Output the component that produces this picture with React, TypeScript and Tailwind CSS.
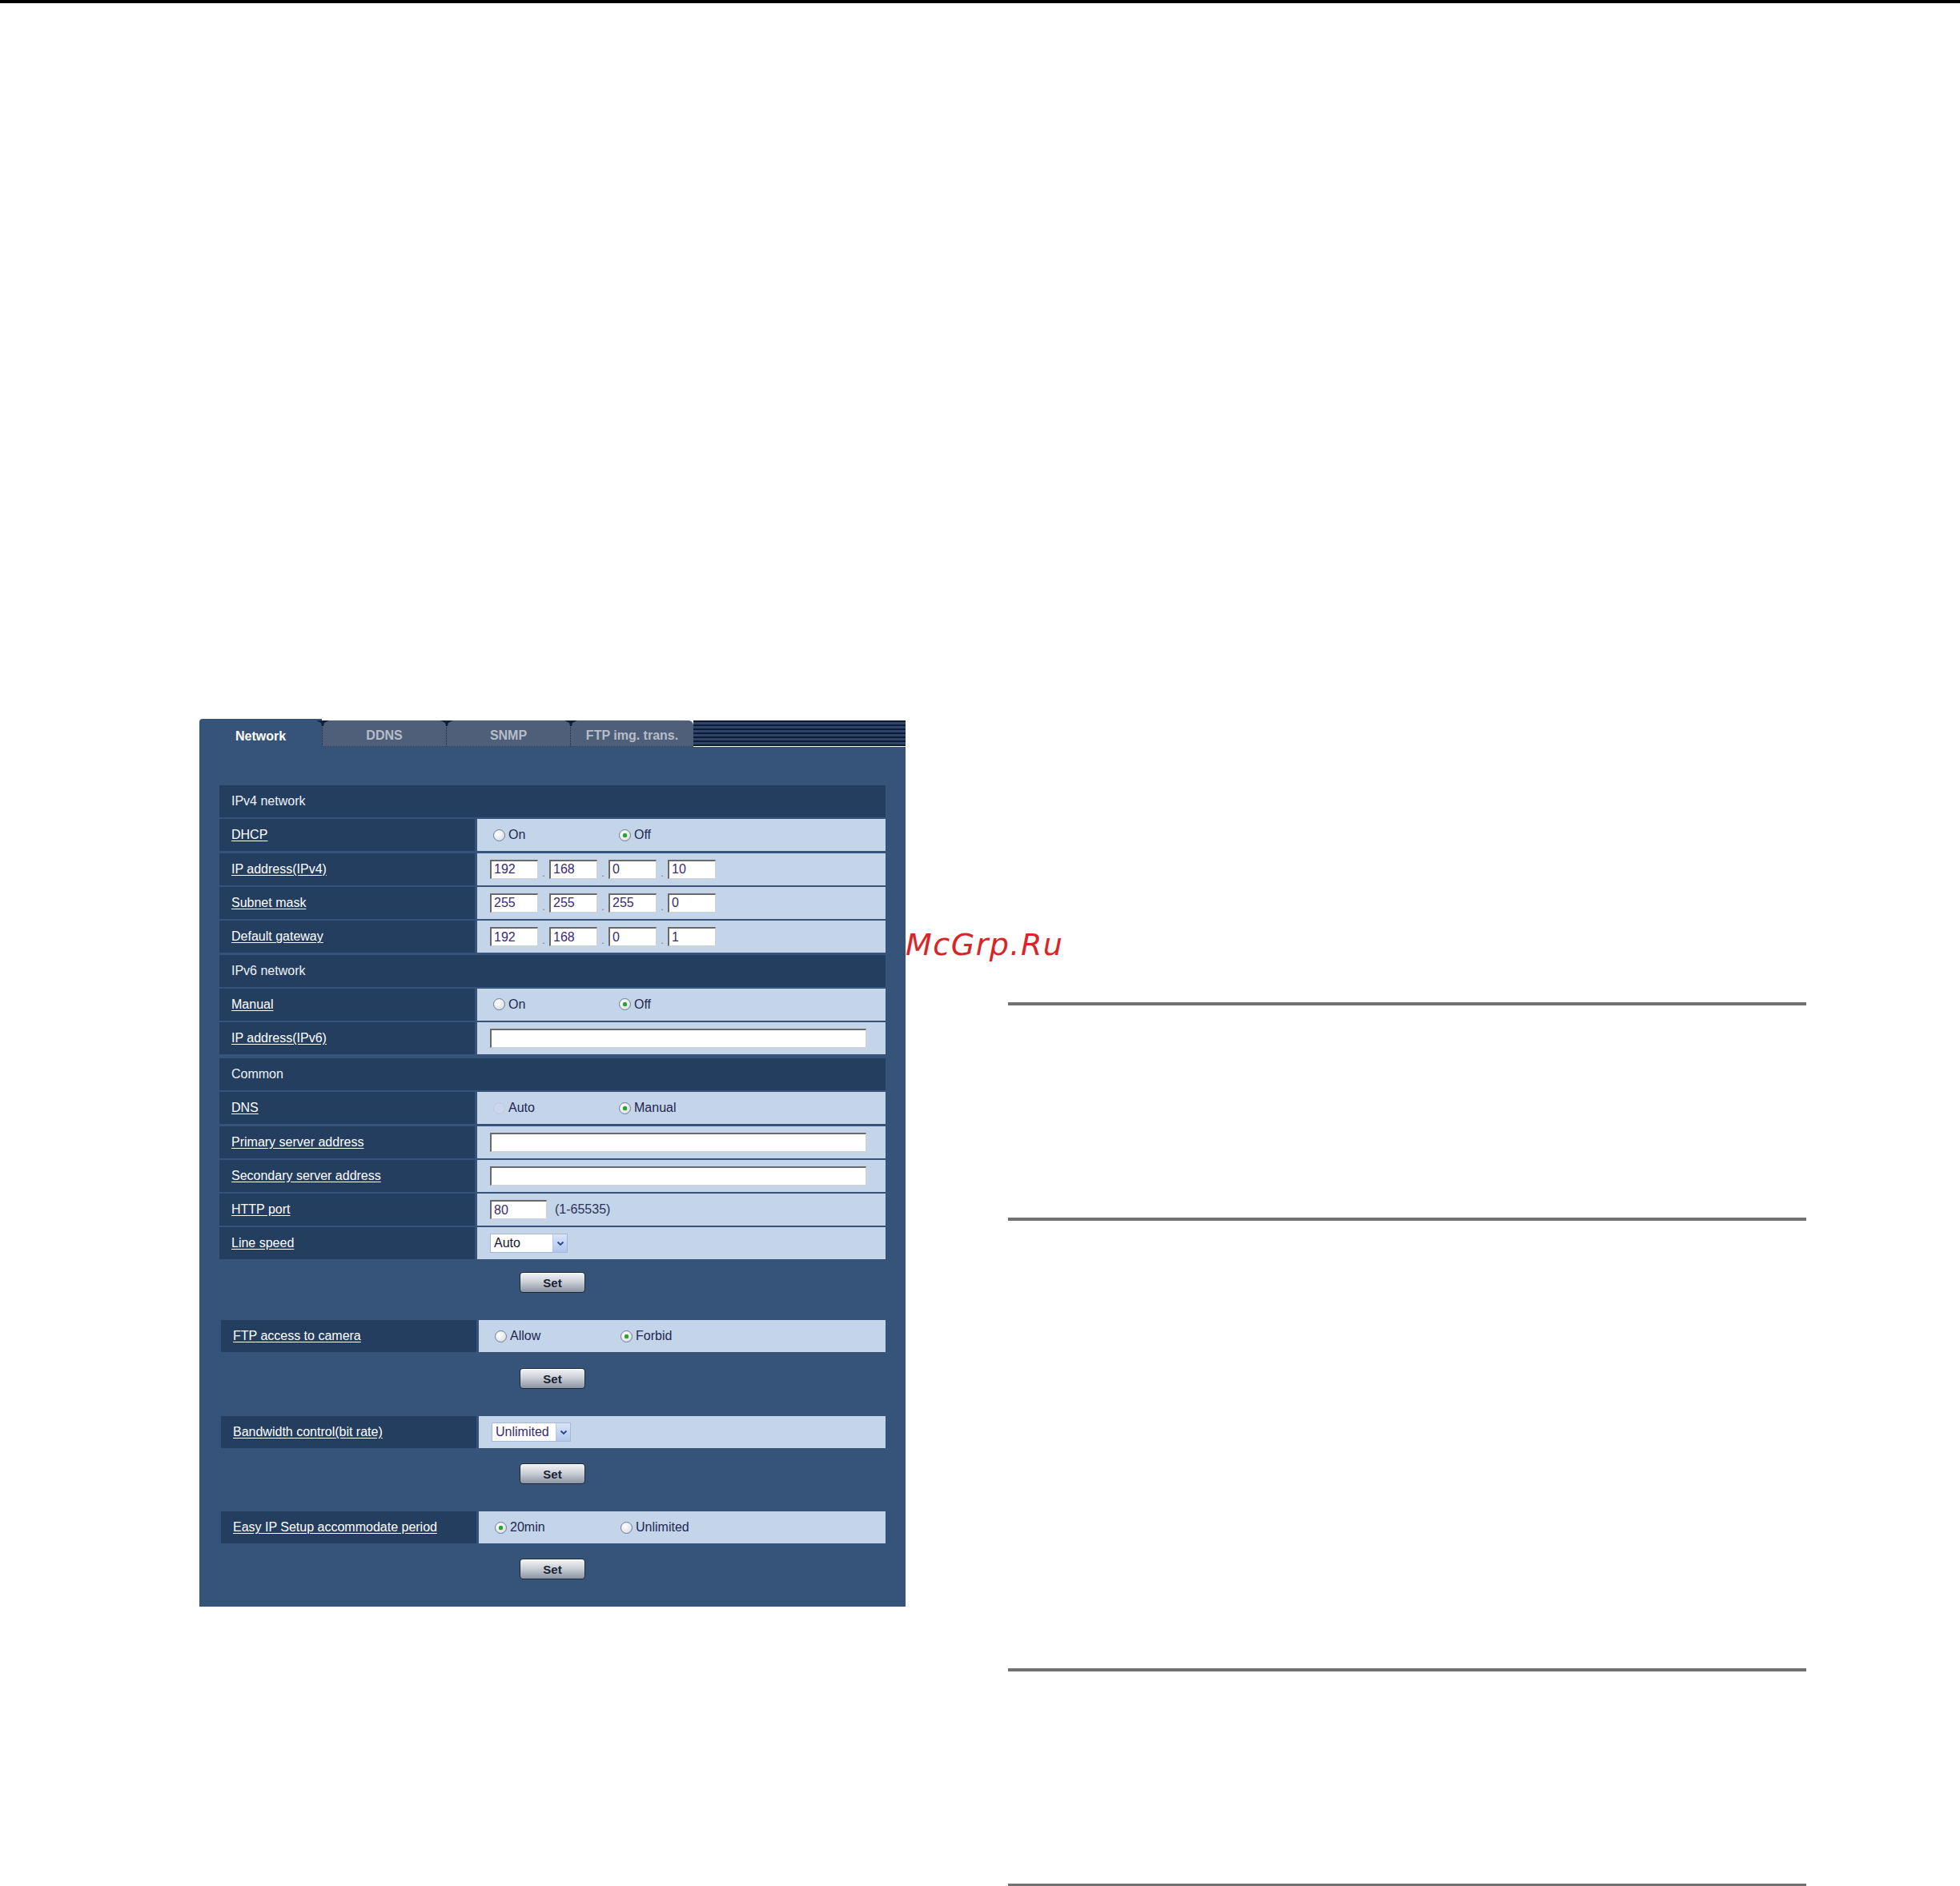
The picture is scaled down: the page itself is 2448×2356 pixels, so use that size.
import type { ReactNode } from "react";
import clsx from "clsx";

const Radio = ({
  checked = false,
  disabled = false,
}: {
  checked?: boolean;
  disabled?: boolean;
}) => (
  <span
    className={clsx(
      "inline-flex h-[15px] w-[15px] shrink-0 items-center justify-center rounded-full border",
      disabled
        ? "border-[#bccadd] bg-[#cad7ea]"
        : "border-[#6c7f97] bg-[radial-gradient(circle_at_35%_35%,#ffffff,#e2e5ea_65%,#c3c9d2)]",
    )}
  >
    {checked && (
      <span className="h-[5px] w-[5px] rounded-full bg-[#2aa62a] shadow-[0_0_1px_#1c7a1c]" />
    )}
  </span>
);

const RadioPair = ({
  a,
  b,
  pick,
  disableA = false,
}: {
  a: string;
  b: string;
  pick: "a" | "b";
  disableA?: boolean;
}) => (
  <div className="ml-[4px] flex items-center text-[16px] text-[#1f2752]">
    <label className="flex w-[157px] items-center gap-[4px]">
      <Radio checked={pick === "a"} disabled={disableA} />
      <span>{a}</span>
    </label>
    <label className="flex items-center gap-[4px]">
      <Radio checked={pick === "b"} />
      <span>{b}</span>
    </label>
  </div>
);

const Field = ({ value = "", className }: { value?: string; className?: string }) => (
  <div
    className={clsx(
      "flex h-[24px] items-center border-t-2 border-l-2 border-r border-b border-t-[#6a6a6a] border-l-[#6a6a6a] border-r-[#d2d2d2] border-b-[#d2d2d2] bg-white pl-[3px] text-[16px] leading-none text-[#3a2c72]",
      className,
    )}
  >
    {value}
  </div>
);

const Quad = ({ parts }: { parts: string[] }) => (
  <div className="flex items-center">
    {parts.map((p, i) => (
      <div key={i} className="flex items-center">
        {i > 0 && (
          <span className="flex h-[24px] w-[14px] items-end justify-center pb-[1px] text-[13px] leading-none text-[#8a7d3c]">
            .
          </span>
        )}
        <Field value={p} className="w-[60px]" />
      </div>
    ))}
  </div>
);

const Select = ({ value, width, tone }: { value: string; width: string; tone: string }) => (
  <div className={clsx("flex h-[24px] items-center border border-[#a8b8d2] bg-white", width)}>
    <span className={clsx("flex-1 pl-[4px] text-[16px] leading-none", tone)}>{value}</span>
    <span className="flex h-full w-[18px] items-center justify-center border-l border-[#b7c8e6] bg-[linear-gradient(to_bottom,#d8e4f8,#b0c6ee)]">
      <svg width="10" height="7" viewBox="0 0 10 7">
        <polyline points="1.5,1.5 5,5 8.5,1.5" fill="none" stroke="#2a4780" strokeWidth="1.8" />
      </svg>
    </span>
  </div>
);

const Row = ({ label, children }: { label: string; children: ReactNode }) => (
  <div className="flex h-[40px] gap-[3px]">
    <div className="flex w-[319px] items-center bg-[#233e5f] pl-[15px]">
      <span className="text-[16px] text-white underline underline-offset-2">{label}</span>
    </div>
    <div className="flex flex-1 items-center bg-[#c4d4e9] pl-[16px]">{children}</div>
  </div>
);

const Header = ({ title }: { title: string }) => (
  <div className="flex h-[40px] items-center bg-[#233e5f] pl-[15px] text-[16px] text-[#eef2f7]">
    {title}
  </div>
);

const SetButton = ({ className }: { className?: string }) => (
  <button
    className={clsx(
      "mx-auto block h-[26px] w-[82px] rounded-[4px] border border-[#1e2838] bg-[linear-gradient(to_bottom,#f3f4f6,#cdd1d8_45%,#8c95a4)] text-[15px] font-bold leading-none text-[#1a2333] shadow-[inset_0_1px_0_#ffffff]",
      className,
    )}
  >
    Set
  </button>
);

const Notch = () => (
  <svg className="absolute left-[-8px] top-0" width="16" height="7" viewBox="0 0 16 7">
    <path d="M0 0 H16 L10 3 L9 7 H7 L6 3 Z" fill="#10203a" />
  </svg>
);

const Tabs = () => (
  <div className="flex h-[35px]">
    <div className="relative flex w-[153px] items-center justify-center rounded-tl-[4px] bg-[#365479] pt-[8px] text-[16px] font-bold text-white">
      Network
    </div>
    {[
      ["DDNS", "w-[155px]"],
      ["SNMP", "w-[155px]"],
      ["FTP img. trans.", "w-[154px] rounded-tr-[6px]"],
    ].map(([name, w]) => (
      <div
        key={name}
        className={clsx(
          "relative mt-[2px] flex items-center justify-center border-b border-l border-dotted border-b-[#2b3f5c] border-l-[#1a2b45] bg-[#4f5f79] pt-[5px] text-[16px] font-bold text-[#b6bdca]",
          w,
        )}
      >
        <Notch />
        {name}
      </div>
    ))}
    <div className="mt-[2px] flex h-[32px] flex-1 flex-col">
      {Array.from({ length: 6 }).map((_, i) => (
        <div key={i}>
          <div className="h-[2px] bg-[#0c1a33]" />
          <div className="h-[3px] bg-[#2e4468]" />
        </div>
      ))}
      <div className="h-[2px] bg-[#0c1a33]" />
    </div>
  </div>
);

const Panel = () => (
  <div className="w-[882px]">
    <Tabs />
    <div className="h-[1074px] bg-[#365479] px-[25px] pt-[48px]">
      <div className="flex flex-col gap-[2.33px]">
        <Header title="IPv4 network" />
        <Row label="DHCP">
          <RadioPair a="On" b="Off" pick="b" />
        </Row>
        <Row label="IP address(IPv4)">
          <Quad parts={["192", "168", "0", "10"]} />
        </Row>
        <Row label="Subnet mask">
          <Quad parts={["255", "255", "255", "0"]} />
        </Row>
        <Row label="Default gateway">
          <Quad parts={["192", "168", "0", "1"]} />
        </Row>
        <Header title="IPv6 network" />
        <Row label="Manual">
          <RadioPair a="On" b="Off" pick="b" />
        </Row>
        <Row label="IP address(IPv6)">
          <Field className="w-[470px]" />
        </Row>
      </div>

      <div className="mt-[5px] flex flex-col gap-[2.2px]">
        <Header title="Common" />
        <Row label="DNS">
          <RadioPair a="Auto" b="Manual" pick="b" disableA />
        </Row>
        <Row label="Primary server address">
          <Field className="w-[470px]" />
        </Row>
        <Row label="Secondary server address">
          <Field className="w-[470px]" />
        </Row>
        <Row label="HTTP port">
          <Field value="80" className="w-[71px]" />
          <span className="ml-[10px] text-[16px] text-[#2b3357]">(1-65535)</span>
        </Row>
        <Row label="Line speed">
          <Select value="Auto" width="w-[97px]" tone="text-[#15182a]" />
        </Row>
      </div>
      <SetButton className="mt-[16px]" />

      <div className="mt-[34px] pl-[2px]">
        <Row label="FTP access to camera">
          <RadioPair a="Allow" b="Forbid" pick="b" />
        </Row>
      </div>
      <SetButton className="mt-[20px]" />

      <div className="mt-[34px] pl-[2px]">
        <Row label="Bandwidth control(bit rate)">
          <Select value="Unlimited" width="w-[99px]" tone="text-[#3a2a6e]" />
        </Row>
      </div>
      <SetButton className="mt-[19px]" />

      <div className="mt-[34px] pl-[2px]">
        <Row label="Easy IP Setup accommodate period">
          <RadioPair a="20min" b="Unlimited" pick="a" />
        </Row>
      </div>
      <SetButton className="mt-[19px]" />
    </div>
  </div>
);

export default function App() {
  return (
    <div className="relative h-[2356px] w-[2448px] overflow-hidden bg-white font-['Liberation_Sans',Arial,sans-serif]">
      <div className="h-[4px] bg-black" />
      <div className="flex">
        <div className="ml-[249px] mt-[894px]">
          <Panel />
        </div>
        <div className="ml-[128px] flex w-[997px] flex-col">
          <div className="mt-[1248px] h-[4px] bg-[#717171]" />
          <div className="mt-[265px] h-[4px] bg-[#717171]" />
          <div className="mt-[559px] h-[4px] bg-[#717171]" />
          <div className="mt-[265px] h-[4px] bg-[#717171]" />
        </div>
      </div>
      <span className="absolute left-[1131px] top-[1161px] font-['DejaVu_Sans',sans-serif] text-[38px] italic leading-none tracking-[1.5px] text-[#d92527]">
        McGrp.Ru
      </span>
    </div>
  );
}
